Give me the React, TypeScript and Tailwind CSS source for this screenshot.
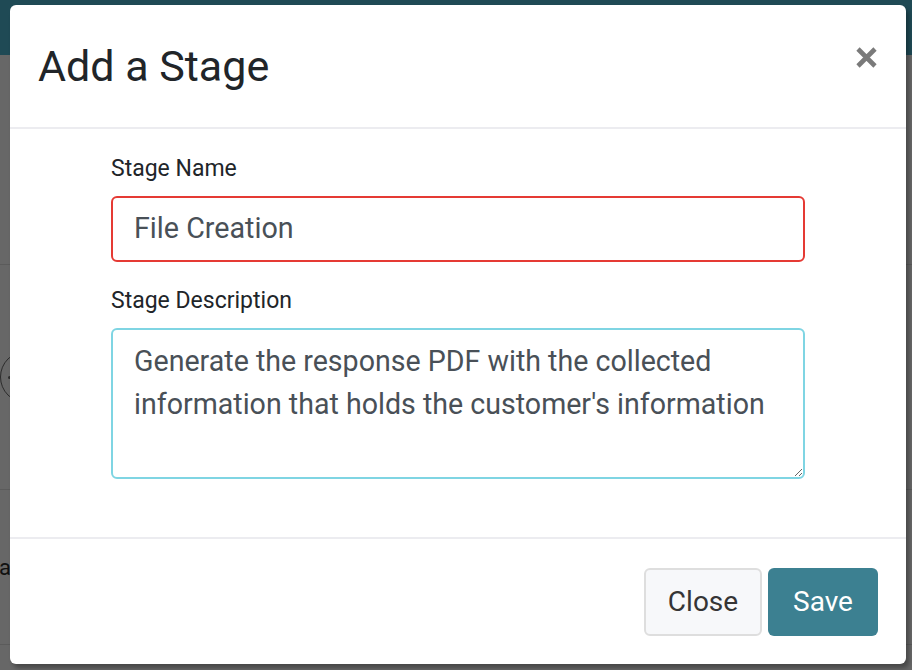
import { useEffect, useRef } from "react";

const description =
  "Generate the response PDF with the collected information that holds the customer's information";

const App = () => {
  const areaRef = useRef<HTMLTextAreaElement>(null);

  useEffect(() => {
    const el = areaRef.current;
    if (el) {
      el.focus();
      el.setSelectionRange(el.value.length, el.value.length);
    }
  }, []);

  return (
    <div className="relative w-[912px] h-[670px] overflow-hidden bg-[#676767] font-['Roboto',sans-serif]">
      {/* page behind the backdrop */}
      <div className="h-[55px] bg-[#1f4a55]" />
      <div className="h-[210px] border-b border-[#5b5b5b]" />
      <div className="h-[225px] border-b border-[#5b5b5b] flex items-center">
        <div className="w-[52px] h-[52px] rounded-full border-[1.5px] border-[#2c2c2c] flex items-center pl-[7px]">
          <div className="w-[3px] h-[3px] rounded-full bg-[#2c2c2c]" />
        </div>
      </div>
      <div className="h-[155px] border-b border-[#5b5b5b] flex items-center">
        <span className="text-[22px] text-[#111] ml-[-1px]">a</span>
      </div>

      {/* modal */}
      <div className="absolute inset-0 pl-[10px] pt-[5px]">
        <div className="w-[896px] h-[659px] bg-white rounded-[6px] flex flex-col shadow-[3px_4px_4px_rgba(0,0,0,0.3)]">
          <div className="h-[124px] shrink-0 border-b-2 border-[#ececf0] flex items-center justify-between pl-[28px] pr-[29px]">
            <h5 className="text-[43px] text-[#212529] leading-none">Add a Stage</h5>
            <button className="w-[21px] h-[21px] mt-[-17px]" aria-label="Close">
              <svg viewBox="0 0 21 21" width="21" height="21">
                <path d="M2 2 L19 19 M19 2 L2 19" stroke="#7a7a7a" strokeWidth="4.6" />
              </svg>
            </button>
          </div>

          <div className="flex-1 px-[101px] pt-[25px]">
            <label className="block text-[23px] leading-[30px] text-[#212529] mb-[12px]">
              Stage Name
            </label>
            <input
              className="block w-full h-[66px] border-2 border-[#e53a34] rounded-[6px] pl-[21px] pb-[3px] text-[28.7px] text-[#495057] outline-none"
              defaultValue="File Creation"
            />
            <label className="block text-[23px] leading-[30px] text-[#212529] mt-[24px] mb-[12px]">
              Stage Description
            </label>
            <textarea
              ref={areaRef}
              className="block w-full h-[151px] border-2 border-[#7fd5e3] rounded-[6px] pl-[21px] pr-[21px] pt-[10px] text-[28.6px] leading-[43px] text-[#495057] caret-[#111] outline-none"
              defaultValue={description}
            />
          </div>

          <div className="h-[127px] shrink-0 border-t-2 border-[#ececf0] flex items-center justify-end gap-[6px] pr-[28px]">
            <button className="w-[118px] h-[68px] rounded-[6px] border-2 border-[#dedede] bg-[#f7f8fa] text-[28px] text-[#353535]">
              Close
            </button>
            <button className="w-[110px] h-[68px] rounded-[6px] bg-[#3c8091] text-[28px] text-white">
              Save
            </button>
          </div>
        </div>
      </div>
    </div>
  );
};

export default App;
